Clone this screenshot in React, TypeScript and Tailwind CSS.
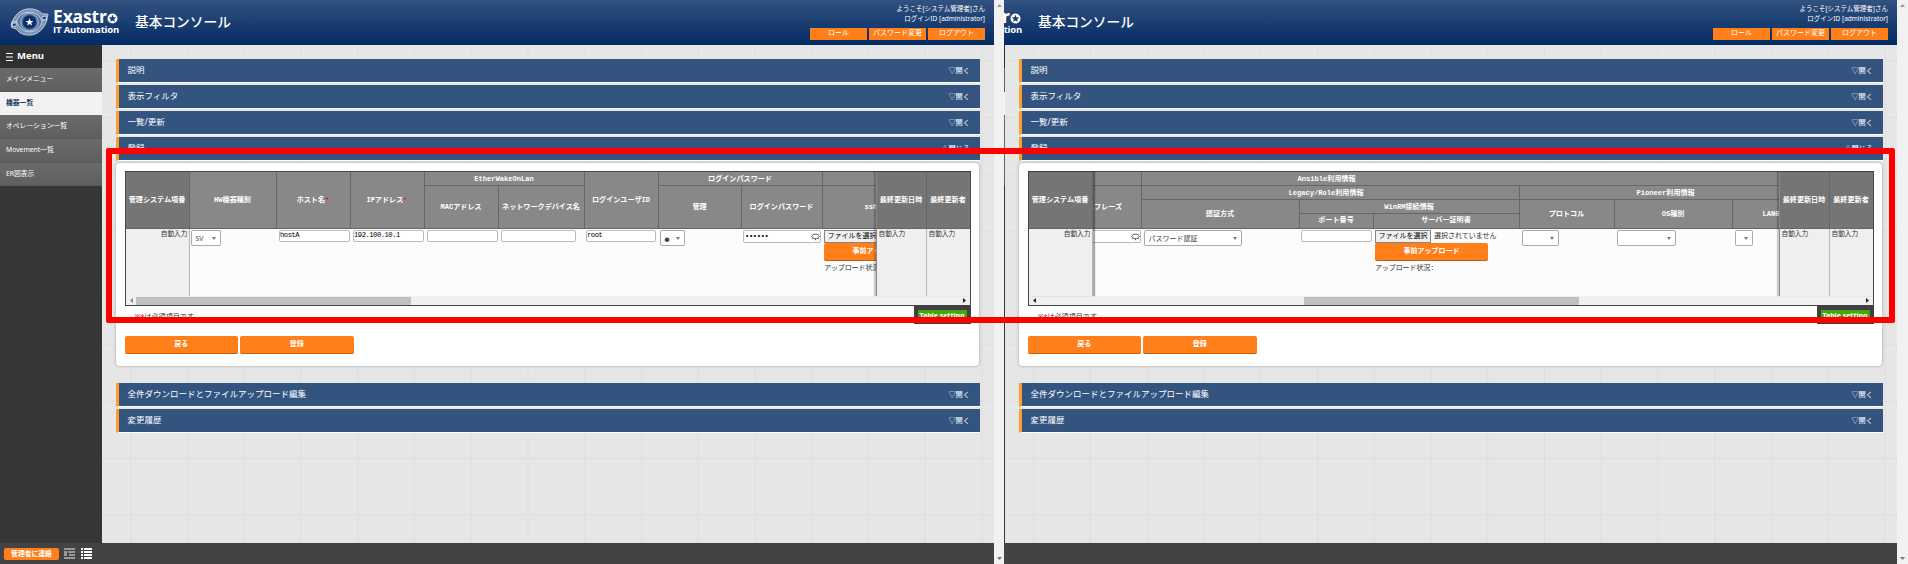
import React from "react";

const menuItems = ["メインメニュー", "機器一覧", "オペレーション一覧", "Movement一覧", "ER図表示"];

const Logo = () => {
  return (
    <div className="flex items-center w-[111px] ml-[10px] shrink-0">
      <svg viewBox="0 0 42 30" className="w-[41px] h-[30px] shrink-0" fill="none">
        <ellipse cx="20" cy="15" rx="14" ry="12.500" fill="#5673a0" />
        <path d="M1 18C4 8 11 1.500 20 1.500c6 0 10 2 13 5l6 .5-1.500 6-5 .5C30 8 26 5 20 5 13 5 9 9 7 13.500l-.5 5z" fill="#7d94b7" stroke="#dbe3ee" strokeWidth=".8" />
        <path d="M38 12c-2 9-9 16.500-18 16.500-6 0-11-2-13-6l-5.500-2L2 15l5-.5C9 21 14 25 20 25c7 0 12-5 13-12z" fill="#7d94b7" stroke="#dbe3ee" strokeWidth=".8" />
        <circle cx="20" cy="15" r="9" stroke="#aebdd3" strokeWidth="1" />
        <circle cx="20" cy="15" r="7" fill="#0c316a" />
        <path d="M2.500 16.500l4-.5-.3 3.500-4-.3zM33.500 9.500l4-.5-.8 3.500-4 .3z" fill="#183c74" stroke="#e8edf5" strokeWidth=".7" />
        <path d="M20 11.200l1.100 2.700 2.900.1-2.300 1.800.8 2.800-2.500-1.600-2.500 1.600.8-2.800L16 14l2.900-.1z" fill="#fff" />
      </svg>
      <div className="flex flex-col ml-[2px] font-['Open_Sans',sans-serif] font-bold text-white whitespace-nowrap">
        <div className="flex items-center text-[17.500px] leading-[17px] tracking-[-0.150px]">
          Exastr
          <svg viewBox="0 0 12 12" className="w-[11px] h-[11px] mt-[3px]">
            <circle cx="6" cy="6" r="5.500" fill="#fff" />
            <path d="M6 2l1.100 2.700 2.900.2-2.200 1.900.7 2.800L6 8.100 3.500 9.600l.7-2.800L2 4.900l2.900-.2z" fill="#143a72" />
          </svg>
        </div>
        <div className="text-[9.500px] leading-[10px] tracking-[-0.150px]">IT Automation</div>
      </div>
    </div>
  );
};

const HeaderButton = ({ children }: { children: React.ReactNode }) => (
  <button className="w-[57px] h-[12px] bg-[#ff7f1a] text-white text-[7px] leading-[9px] pb-[2px] whitespace-nowrap">
    {children}
  </button>
);

const Header = () => (
  <header className="flex justify-between h-[45px] bg-linear-to-b from-[#32527f] to-[#022a64] text-white">
    <div className="flex items-center pb-[2px]">
      <Logo />
      <h1 className="ml-[14px] text-[13.700px] font-medium leading-none">基本コンソール</h1>
    </div>
    <div className="flex flex-col items-end pt-[4px] pr-[8.500px] text-[6.500px] leading-[9.800px]">
      <div>ようこそ[システム管理者]さん</div>
      <div>ログインID [administrator]</div>
      <div className="flex gap-[2px] mt-[4px]">
        <HeaderButton>ロール</HeaderButton>
        <HeaderButton>パスワード変更</HeaderButton>
        <HeaderButton>ログアウト</HeaderButton>
      </div>
    </div>
  </header>
);

const Sidebar = () => (
  <aside className="w-[101.500px] shrink-0 bg-[#363636] text-white">
    <div className="h-[23px] flex items-center gap-[4px] pl-[6px] pb-[2px] bg-[#303030]">
      <svg viewBox="0 0 7 8" className="w-[7px] h-[8px] mt-[3px]" stroke="#fff">
        <path d="M0 .5h7M0 4h7M0 7.500h7" />
      </svg>
      <span className="text-[9.500px] font-bold leading-none">Menu</span>
    </div>
    {menuItems.map((item, index) => (
      <div
        key={item}
        className={
          index === 1
            ? "h-[23.700px] flex items-center pl-[6px] pb-px text-[6.800px] font-bold bg-[#f2f2f2] text-[#1c3a66]"
            : "h-[23.700px] flex items-center pl-[6px] pb-px text-[6.800px] bg-linear-to-b from-[#6b6b6b] to-[#5f5f5f] border-b border-[#585858]"
        }
      >
        {item}
      </div>
    ))}
  </aside>
);

const Bar = ({ title, open = false }: { title: string; open?: boolean }) => (
  <div className="h-[24px] mb-[2px] flex justify-between bg-[#32547f] border-l-[3px] border-l-[#ff9c2c] border-b border-b-white text-white">
    <span className="pl-[9px] text-[8.500px] leading-[21px]">{title}</span>
    <span className="pr-[10px] text-[7.200px] leading-[23px]">{open ? "△閉じる" : "▽開く"}</span>
  </div>
);

const Th = ({ className = "", children }: { className?: string; children?: React.ReactNode }) => (
  <div
    className={
      "flex items-center justify-center shrink-0 pt-[2px] border-r border-b border-[#666] text-white font-bold leading-none whitespace-nowrap " +
      className
    }
  >
    {children}
  </div>
);

const Select = ({ className = "", children }: { className?: string; children?: React.ReactNode }) => (
  <div
    className={
      "h-[16px] flex items-center justify-between pl-[4px] pr-[3.500px] bg-white border border-[#aaa] rounded-[2px] font-['Open_Sans','Noto_Sans_CJK_JP',sans-serif] text-[7px] leading-none text-[#444] " +
      className
    }
  >
    <span>{children}</span>
    <svg viewBox="0 0 4 3" className="w-[4px] h-[3px]">
      <path d="M0 0h4L2 3z" fill="#777" />
    </svg>
  </div>
);

const Input = ({ className = "", children }: { className?: string; children?: React.ReactNode }) => (
  <div
    className={
      "h-[12px] flex items-center pl-[0.500px] bg-white border border-[#bbb] rounded-[2px] text-[7.200px] tracking-[-0.500px] leading-none text-black " +
      className
    }
  >
    {children}
  </div>
);

const Eye = () => (
  <svg viewBox="0 0 9 8" className="w-[9px] h-[8px] ml-auto mt-px" fill="none" stroke="#444" strokeWidth=".9">
    <path d="M.6 3.500C1.500.2 7.500.2 8.400 3.500 7.500 6.300 1.500 6.300.6 3.500M2 5.200l-.6 1M4.500 5.700v1.500M7 5.200l.6 1" />
  </svg>
);

const Upload = () => (
  <div className="w-[146px] shrink-0 pl-[1.500px]">
    <div className="flex items-center h-[14px] text-[7px] whitespace-nowrap">
      <span className="w-[56px] h-[13px] flex items-center justify-center border border-[#858585] bg-[#efefef] text-black">
        ファイルを選択
      </span>
      <span className="ml-[3px]">選択されていません</span>
    </div>
    <div className="w-[113px] h-[18px] flex items-center justify-center bg-[#ff7f1a] border-b border-[#c65f10] rounded-[2px] text-white text-[7px] font-bold leading-none">
      事前アップロード
    </div>
    <div className="mt-[2px] text-[7px] leading-[11px] tracking-[-0.100px] whitespace-nowrap">アップロード状況:</div>
  </div>
);

const Cell = ({ className = "", children }: { className?: string; children?: React.ReactNode }) => (
  <div className={"shrink-0 pl-[2px] pt-px " + className}>{children}</div>
);

const Required = () => <span className="text-[#d22]">*</span>;

const TableStart = () => (
  <>
    <div className="flex h-[57px]">
      <Th className="w-[87px]">HW機器種別</Th>
      <Th className="w-[74px]">ホスト名<Required /></Th>
      <Th className="w-[74px]">IPアドレス<Required /></Th>
      <div className="w-[160px] shrink-0">
        <Th className="h-[14px]">EtherWakeOnLan</Th>
        <div className="flex h-[43px]">
          <Th className="w-[74px]">MACアドレス</Th>
          <Th className="w-[86px]">ネットワークデバイス名</Th>
        </div>
      </div>
      <Th className="w-[74px]">ログインユーザID</Th>
      <div className="w-[164px] shrink-0">
        <Th className="h-[14px]">ログインパスワード</Th>
        <div className="flex h-[43px]">
          <Th className="w-[83px]">管理</Th>
          <Th className="w-[81px]">ログインパスワード</Th>
        </div>
      </div>
      <div className="w-[200px] shrink-0">
        <Th className="h-[14px]" />
        <Th className="h-[43px] justify-start! pl-[42px]">ssh鍵認証情報</Th>
      </div>
    </div>
    <div className="flex h-[67px]">
      <Cell className="w-[87px] pl-px!"><Select className="w-[30px]">SV</Select></Cell>
      <Cell className="w-[74px]"><Input className="w-[71px]">hostA</Input></Cell>
      <Cell className="w-[74px]"><Input className="w-[71px]">192.100.10.1</Input></Cell>
      <Cell className="w-[74px]"><Input className="w-[71px]" /></Cell>
      <Cell className="w-[86px]"><Input className="w-[75px]" /></Cell>
      <Cell className="w-[74px] pl-px!"><Input className="w-[70px]">root</Input></Cell>
      <Cell className="w-[83px] pl-px!"><Select className="w-[25px]"><span className="text-[5px]">●</span></Select></Cell>
      <Cell className="w-[81px] pl-px!">
        <Input className="w-[78px] h-[13px]!"><span className="pl-px tracking-[-0.400px]">••••••</span><Eye /></Input>
      </Cell>
      <Upload />
    </div>
  </>
);

const TableEnd = () => (
  <>
    <div className="flex h-[57px]">
      <div className="w-[49px] shrink-0">
        <Th className="h-[14px]" />
        <Th className="h-[43px] justify-start!"><span className="-ml-[5.500px]">スフレーズ</span></Th>
      </div>
      <div className="w-[720px] shrink-0">
        <Th className="h-[14px] justify-start! pl-[156px]">Ansible利用情報</Th>
        <div className="flex h-[43px]">
          <div className="w-[378px] shrink-0">
            <Th className="h-[14px] pr-[8px]">Legacy/Role利用情報</Th>
            <div className="flex h-[29px]">
              <Th className="w-[158px]">認証方式</Th>
              <div className="w-[220px]">
                <Th className="h-[14px]">WinRM接続情報</Th>
                <div className="flex h-[15px]">
                  <Th className="w-[74px] pt-0!">ポート番号</Th>
                  <Th className="w-[146px] pt-0!">サーバー証明書</Th>
                </div>
              </div>
            </div>
          </div>
          <div className="w-[342px] shrink-0">
            <Th className="h-[14px] justify-start! pl-[117px]">Pioneer利用情報</Th>
            <div className="flex h-[29px]">
              <Th className="w-[95px]">プロトコル</Th>
              <Th className="w-[118px]">OS種別</Th>
              <Th className="w-[129px] justify-start! pl-[30px]">LANG</Th>
            </div>
          </div>
        </div>
      </div>
    </div>
    <div className="flex h-[67px]">
      <Cell className="w-[49px] pl-0!"><Input className="w-[48px] h-[13px]! border-l-0 rounded-l-none"><Eye /></Input></Cell>
      <Cell className="w-[158px]"><Select className="w-[98px]">パスワード認証</Select></Cell>
      <Cell className="w-[74px] pl-px!"><Input className="w-[71px]" /></Cell>
      <Upload />
      <Cell className="w-[95px]"><Select className="w-[37px]" /></Cell>
      <Cell className="w-[118px]"><Select className="w-[59px]" /></Cell>
      <Cell className="w-[129px]"><Select className="w-[18px]" /></Cell>
    </div>
  </>
);

const Table = ({ scrolled }: { scrolled: boolean }) => (
  <div className="w-[846px] h-[135px] border border-[#444] bg-[#fcfcfc] font-['Liberation_Mono','Noto_Sans_CJK_JP',monospace] text-[7.100px] text-[#333]">
    <div className="flex h-[124px]">
      <div className={scrolled ? "w-[64px] shrink-0 shadow-[2px_0_1px_#0005] z-10" : "w-[64px] shrink-0"}>
        <Th className="h-[57px] bg-[#757575]">管理システム項番</Th>
        <div className="h-[67px] bg-[#efefef] border-r border-[#b5b5b5] text-right text-[6.700px] leading-[11px] pr-px">自動入力</div>
      </div>
      <div className="flex-1 min-w-0 overflow-hidden bg-linear-to-b from-[#888] from-[57px] to-[#fcfcfc] to-[57px]">
        {scrolled ? <TableEnd /> : <TableStart />}
      </div>
      <div className="flex w-[94px] shrink-0 border-l border-[#888] shadow-[-2px_0_1px_#0003] z-10">
        <div className="w-[50px]">
          <Th className="h-[57px] bg-[#757575]">最終更新日時</Th>
          <div className="h-[67px] bg-[#efefef] border-r border-[#b5b5b5] text-[6.700px] leading-[11px] pl-[2px]">自動入力</div>
        </div>
        <div className="w-[43px]">
          <Th className="h-[57px] bg-[#757575] border-r-0">最終更新者</Th>
          <div className="h-[67px] bg-[#efefef] text-[6.700px] leading-[11px] pl-[2px]">自動入力</div>
        </div>
      </div>
    </div>
    <div className="h-[9px] flex items-center px-[4px] bg-[#f0f0f0]">
      <svg viewBox="0 0 3 5" className="w-[3px] h-[5px]">
        <path d="M3 0v5L0 2.500z" fill={scrolled ? "#222" : "#888"} />
      </svg>
      <div className={scrolled ? "w-[275px] h-[8px] ml-[268px] bg-[#c1c1c1]" : "w-[275px] h-[8px] ml-[3px] bg-[#c1c1c1]"} />
      <svg viewBox="0 0 3 5" className="w-[3px] h-[5px] ml-auto">
        <path d="M0 0v5l3-2.500z" fill="#222" />
      </svg>
    </div>
  </div>
);

const ActionButton = ({ children }: { children: React.ReactNode }) => (
  <button className="w-[113.500px] h-[18px] pb-[2px] bg-[#ff7f1a] border-b border-[#c65f10] rounded-[2px] text-white text-[7px] font-bold leading-none">
    {children}
  </button>
);

const Console = ({ scrolled = false }: { scrolled?: boolean }) => (
  <div className="w-[1005px] h-[564px] flex shrink-0">
    <div className="w-[993.500px] flex flex-col">
      <Header />
      <div className="flex h-[498px]">
        <Sidebar />
        <main className="flex-1 pl-[14px] pr-[13.500px] pt-[14px] bg-[#e6e6e6] bg-[linear-gradient(#dedede_1px,transparent_1px),linear-gradient(90deg,#dedede_1px,transparent_1px)] bg-size-[56.750px_56.750px] bg-position-[28.250px_15.500px]">
          <Bar title="説明" />
          <Bar title="表示フィルタ" />
          <Bar title="一覧/更新" />
          <Bar title="登録" open />
          <div className="w-[863px] h-[203px] mt-px pl-[9px] pt-[8px] rounded-[4px] bg-white shadow-[0_0_3px_#999]">
            <Table scrolled={scrolled} />
            <div className="flex justify-between w-[846px]">
              <p className="pl-[10px] pt-[5px] text-[7.100px] leading-[10px] text-[#333]">
                ※<span className="text-[#f00]">*</span>は必須項目です。
              </p>
              <div className="w-[57px] h-[18px] p-[4px] bg-[#404040]">
                <div className="h-[11px] bg-[#4aa310] text-white text-center text-[7px] font-bold leading-[11px] whitespace-nowrap">
                  Table setting
                </div>
              </div>
            </div>
            <div className="flex gap-[2px] mt-[12px]">
              <ActionButton>戻る</ActionButton>
              <ActionButton>登録</ActionButton>
            </div>
          </div>
          <div className="mt-[17px]">
            <Bar title="全件ダウンロードとファイルアップロード編集" />
            <Bar title="変更履歴" />
          </div>
        </main>
      </div>
      <footer className="h-[21px] flex items-center pl-[4px] bg-[#434343]">
        <button className="w-[55px] h-[12px] rounded-[2px] bg-[#ff7f1a] text-white text-[6.800px] font-bold leading-[9px]">
          管理者に連絡
        </button>
        <svg viewBox="0 0 11 11" className="w-[11px] h-[11px] ml-[5px]" fill="#999">
          <path d="M0 0h11v2H0zM0 3h3v5H0zM4 3h7v2H4zM5 6h6v2H5zM0 9h11v2H0z" />
        </svg>
        <svg viewBox="0 0 11 11" className="w-[11px] h-[11px] ml-[6px]" fill="#fff">
          <path d="M0 0h2v2H0zM3 0h8v2H3zM0 3h2v2H0zM3 3h8v2H3zM0 6h2v2H0zM3 6h8v2H3zM0 9h2v2H0zM3 9h8v2H3z" />
        </svg>
      </footer>
    </div>
    <div className="w-[11.500px] flex flex-col items-center justify-between pt-[4px] pb-[4px] bg-[#f1f1f1]">
      <svg viewBox="0 0 5 3" className="w-[5px] h-[3px]">
        <path d="M0 3h5L2.500 0z" fill="#999" />
      </svg>
      <svg viewBox="0 0 5 3" className="w-[5px] h-[3px]">
        <path d="M0 0h5L2.500 3z" fill="#777" />
      </svg>
    </div>
  </div>
);

const App = () => {
  return (
    <div className="relative flex w-[1908px] h-[564px] overflow-hidden font-['Noto_Sans','Noto_Sans_CJK_JP',sans-serif]">
      <div className="w-[1004px] shrink-0 overflow-hidden">
        <Console />
      </div>
      <div className="w-[904px] flex justify-end overflow-hidden">
        <Console scrolled />
      </div>
      <div className="absolute z-20 left-[106px] top-[148px] w-[1789px] h-[175px] border-[6px] border-[#f00] rounded-[2px]" />
    </div>
  );
};

export default App;
